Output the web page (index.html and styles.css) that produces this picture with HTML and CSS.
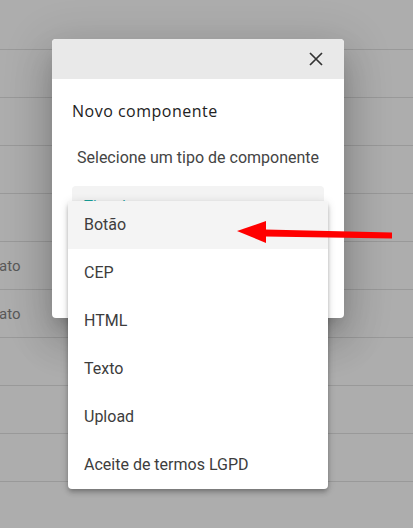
FILE: index.html
```html
<!DOCTYPE html>
<html lang="pt-BR">
<head>
  <meta charset="UTF-8">
  <meta name="viewport" content="width=device-width, initial-scale=1.0">
  <title>Novo componente</title>
  <link rel="stylesheet" href="styles.css">
</head>
<body>

  <div class="page">
    <div class="row"></div>
    <div class="row"></div>
    <div class="row"></div>
    <div class="row"></div>
    <div class="row"></div>
    <div class="row"><span>ato</span></div>
    <div class="row"><span>ato</span></div>
    <div class="row"></div>
    <div class="row"></div>
    <div class="row"></div>
  </div>

  <div class="dialog">
    <div class="dialog-head">
      <svg class="close" width="14" height="14" viewBox="0 0 14 14">
        <path d="M1 1L13 13M13 1L1 13" stroke="#333" stroke-width="1.7" fill="none"/>
      </svg>
    </div>
    <div class="dialog-body">
      <h2>Novo componente</h2>
      <p>Selecione um tipo de componente</p>
      <div class="field"><span>Tipo de componente</span></div>
    </div>
  </div>

  <ul class="menu">
    <li class="active">Botão</li>
    <li>CEP</li>
    <li>HTML</li>
    <li>Texto</li>
    <li>Upload</li>
    <li>Aceite de termos LGPD</li>
  </ul>

  <svg class="arrow" width="160" height="26" viewBox="0 0 160 26">
    <path d="M28 8.5L155 11.5L155 17.5L28 15.5Z" fill="#f00"/>
    <path d="M0 10L29 0L29 22Z" fill="#f00"/>
  </svg>

</body>
</html>
```

FILE: styles.css
```css
html, body {
  margin: 0;
  padding: 0;
}
body {
  width: 413px;
  height: 528px;
  overflow: hidden;
  position: relative;
  background-color: #adadad;
  font-family: 'Roboto', 'Liberation Sans', sans-serif;
}
.page {
  padding-top: 2px;
}
.row {
  height: 47px;
  border-bottom: 1px solid #999;
  display: flex;
  align-items: center;
  font-size: 15px;
  color: #595959;
}
.row span {
  margin-left: -1px;
  padding-top: 1px;
}

.dialog {
  position: absolute;
  left: 52px;
  top: 39px;
  width: 292px;
  height: 279px;
  background-color: #fff;
  border-radius: 4px;
  overflow: hidden;
  box-shadow: 0 11px 15px -7px rgba(0,0,0,.2), 0 24px 38px 3px rgba(0,0,0,.14), 0 9px 46px 8px rgba(0,0,0,.12);
}
.dialog-head {
  height: 40px;
  background-color: #e9e9e9;
  display: flex;
  justify-content: flex-end;
  align-items: center;
  padding-right: 21px;
}
.dialog-body {
  padding: 20px 20px 0 20px;
}
.dialog-body h2 {
  margin: 0;
  font-family: 'Open Sans', sans-serif;
  font-weight: 500;
  font-size: 16px;
  letter-spacing: 0.5px;
  color: #222;
  line-height: 24px;
}
.dialog-body p {
  margin: 25px 0 0 5px;
  font-size: 16px;
  color: #444;
  line-height: 20px;
}
.field {
  margin-top: 18px;
  height: 56px;
  background-color: #f3f3f3;
  border-radius: 4px 4px 0 0;
  padding: 11px 12px 0;
  box-sizing: border-box;
  font-size: 15px;
  line-height: 18px;
  color: #1aa39c;
}

.menu {
  position: absolute;
  left: 68px;
  top: 201px;
  width: 260px;
  margin: 0;
  padding: 0;
  list-style: none;
  background-color: #fff;
  border-radius: 4px;
  overflow: hidden;
  box-shadow: 0 2px 4px -1px rgba(0,0,0,.2), 0 4px 5px 0 rgba(0,0,0,.14), 0 1px 10px 0 rgba(0,0,0,.12);
}
.menu li {
  height: 48px;
  line-height: 48px;
  padding-left: 16px;
  font-size: 16px;
  color: #3d3d3d;
}
.menu li.active {
  background-color: #f4f4f4;
}

.arrow {
  position: absolute;
  left: 237px;
  top: 221px;
}
```
